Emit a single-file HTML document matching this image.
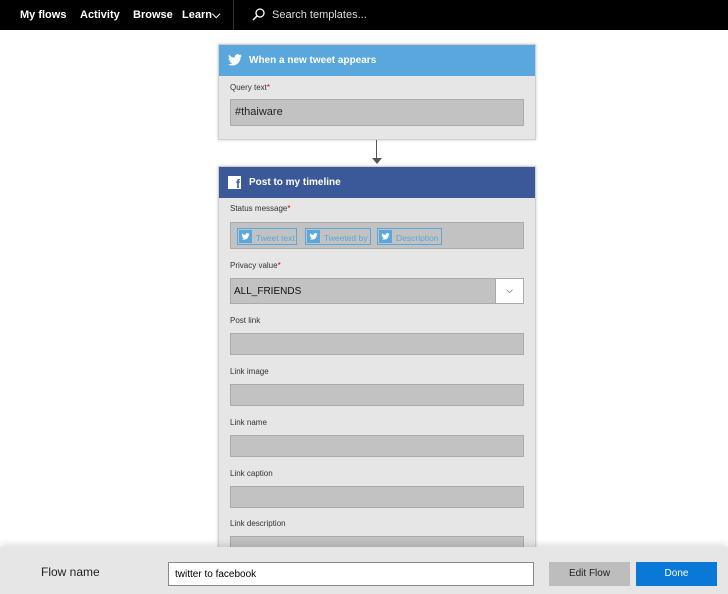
<!DOCTYPE html>
<html><head><style>
*{box-sizing:border-box;margin:0;padding:0}
body{width:728px;height:594px;overflow:hidden;background:#fff;font-family:"Liberation Sans",Arial,sans-serif;position:relative}
.nav{position:absolute;left:0;top:0;width:728px;height:30px;background:#000;color:#fff;font-size:11px;font-weight:bold}
.nav span{position:absolute;top:9px}
.card{position:absolute;left:218px;width:318px;background:#e6e6e6;border:1px solid #cfcfcf;box-shadow:0 0 3px rgba(0,0,0,.2)}
.hd{height:31px;color:#fff;font-size:10px;font-weight:bold;position:relative}
.hd span{position:absolute;left:30px;top:10px}
.lbl{position:absolute;left:11px;font-size:8px;color:#333}
.lbl i{color:#d00;font-style:normal}
.inp{position:absolute;left:11px;width:294px;background:#c2c2c2;border:1px solid #aaa}
.tok{position:absolute;top:5px;height:17px;border:1px solid #5aa7dd;color:#5aa7dd;font-size:8.5px;padding:4px 0 0 18px}
.tok svg{position:absolute;left:1px;top:1px}
</style></head><body>
<div class="nav">
<span style="left:20px">My flows</span><span style="left:80px">Activity</span><span style="left:133px">Browse</span><span style="left:182px">Learn⌵</span>
<div style="position:absolute;left:233px;top:0;width:1px;height:30px;background:#333"></div>
<svg style="position:absolute;left:252px;top:8px" width="13" height="13" viewBox="0 0 13 13"><circle cx="8" cy="5" r="4" fill="none" stroke="#fff" stroke-width="1.3"/><path d="M5 8L1 12" stroke="#fff" stroke-width="1.5"/></svg>
<span style="left:272px;font-weight:normal;color:#ddd">Search templates...</span>
</div>

<div class="card" style="top:44px;height:96px">
<div class="hd" style="background:#5aa7dd"><svg style="position:absolute;left:9px;top:9px" width="14" height="12" viewBox="0 0 24 20"><path d="M24 2.4a10 10 0 0 1-2.8.8A5 5 0 0 0 23.3.4a10 10 0 0 1-3.1 1.2A4.9 4.9 0 0 0 11.8 6 14 14 0 0 1 1.7.9a4.9 4.9 0 0 0 1.5 6.6A5 5 0 0 1 1 6.9 4.9 4.9 0 0 0 4.9 11.8a5 5 0 0 1-2.2.1 4.9 4.9 0 0 0 4.6 3.4A9.9 9.9 0 0 1 0 17.3 14 14 0 0 0 7.5 19.5c9 0 14-7.5 14-14v-.6A10 10 0 0 0 24 2.4z" fill="#fff"/></svg><span>When a new tweet appears</span></div>
<div class="lbl" style="top:38px">Query text<i>*</i></div>
<div class="inp" style="top:54px;height:27px;font-size:11px;color:#222;padding:6px 4px">#thaiware</div>
</div>

<div style="position:absolute;left:376px;top:140px;width:1px;height:20px;background:#555"></div>
<div style="position:absolute;left:372px;top:158px;border-left:5px solid transparent;border-right:5px solid transparent;border-top:6px solid #555"></div>

<div class="card" style="top:166px;height:400px">
<div class="hd" style="background:#3b5998"><div style="position:absolute;left:9px;top:9px;width:13px;height:13px;background:#fff;color:#3b5998;font-size:12px;font-weight:bold;text-align:right;padding-right:1px;line-height:16px;overflow:hidden">f</div><span>Post to my timeline</span></div>
<div class="lbl" style="top:37px">Status message<i>*</i></div>
<div class="inp" style="top:55px;height:27px">
<div class="tok" style="left:6px;width:60px"><svg width="13" height="13" viewBox="0 0 13 13"><rect width="13" height="13" fill="#5aa7dd"/><path transform="translate(2.5 3) scale(.34)" d="M24 2.4a10 10 0 0 1-2.8.8A5 5 0 0 0 23.3.4a10 10 0 0 1-3.1 1.2A4.9 4.9 0 0 0 11.8 6 14 14 0 0 1 1.7.9a4.9 4.9 0 0 0 1.5 6.6A5 5 0 0 1 1 6.9 4.9 4.9 0 0 0 4.9 11.8a5 5 0 0 1-2.2.1 4.9 4.9 0 0 0 4.6 3.4A9.9 9.9 0 0 1 0 17.3 14 14 0 0 0 7.5 19.5c9 0 14-7.5 14-14v-.6A10 10 0 0 0 24 2.4z" fill="#fff"/></svg>Tweet text</div>
<div class="tok" style="left:74px;width:66px"><svg width="13" height="13" viewBox="0 0 13 13"><rect width="13" height="13" fill="#5aa7dd"/><path transform="translate(2.5 3) scale(.34)" d="M24 2.4a10 10 0 0 1-2.8.8A5 5 0 0 0 23.3.4a10 10 0 0 1-3.1 1.2A4.9 4.9 0 0 0 11.8 6 14 14 0 0 1 1.7.9a4.9 4.9 0 0 0 1.5 6.6A5 5 0 0 1 1 6.9 4.9 4.9 0 0 0 4.9 11.8a5 5 0 0 1-2.2.1 4.9 4.9 0 0 0 4.6 3.4A9.9 9.9 0 0 1 0 17.3 14 14 0 0 0 7.5 19.5c9 0 14-7.5 14-14v-.6A10 10 0 0 0 24 2.4z" fill="#fff"/></svg>Tweeted by</div>
<div class="tok" style="left:146px;width:65px"><svg width="13" height="13" viewBox="0 0 13 13"><rect width="13" height="13" fill="#5aa7dd"/><path transform="translate(2.5 3) scale(.34)" d="M24 2.4a10 10 0 0 1-2.8.8A5 5 0 0 0 23.3.4a10 10 0 0 1-3.1 1.2A4.9 4.9 0 0 0 11.8 6 14 14 0 0 1 1.7.9a4.9 4.9 0 0 0 1.5 6.6A5 5 0 0 1 1 6.9 4.9 4.9 0 0 0 4.9 11.8a5 5 0 0 1-2.2.1 4.9 4.9 0 0 0 4.6 3.4A9.9 9.9 0 0 1 0 17.3 14 14 0 0 0 7.5 19.5c9 0 14-7.5 14-14v-.6A10 10 0 0 0 24 2.4z" fill="#fff"/></svg>Description</div>
</div>
<div class="lbl" style="top:94px">Privacy value<i>*</i></div>
<div class="inp" style="top:111px;height:26px;font-size:10px;color:#111;padding:7px 3px">ALL_FRIENDS<div style="position:absolute;right:0;top:0;width:28px;height:24px;background:#fff;border-left:1px solid #aaa;font-size:9px;text-align:center;padding-top:6px">⌵</div></div>
<div class="lbl" style="top:149px">Post link</div><div class="inp" style="top:166px;height:22px"></div>
<div class="lbl" style="top:200px">Link image</div><div class="inp" style="top:217px;height:22px"></div>
<div class="lbl" style="top:251px">Link name</div><div class="inp" style="top:268px;height:22px"></div>
<div class="lbl" style="top:302px">Link caption</div><div class="inp" style="top:319px;height:22px"></div>
<div class="lbl" style="top:352px">Link description</div><div class="inp" style="top:369px;height:22px"></div>
</div>

<div style="position:absolute;left:0;top:547px;width:728px;height:47px;background:#e6e6e6;box-shadow:0 -3px 6px rgba(0,0,0,.12)">
<div style="position:absolute;left:41px;top:18px;font-size:12px;color:#222">Flow name</div>
<div style="position:absolute;left:168px;top:15px;width:366px;height:24px;background:#fff;border:1px solid #888;font-size:10px;padding:6px 6px">twitter to facebook</div>
<div style="position:absolute;left:549px;top:15px;width:81px;height:24px;background:#bdbdbd;font-size:10px;text-align:center;line-height:24px;color:#222">Edit Flow</div>
<div style="position:absolute;left:636px;top:15px;width:81px;height:24px;background:#0a78d7;font-size:10px;text-align:center;line-height:24px;color:#fff">Done</div>
</div>
</body></html>
